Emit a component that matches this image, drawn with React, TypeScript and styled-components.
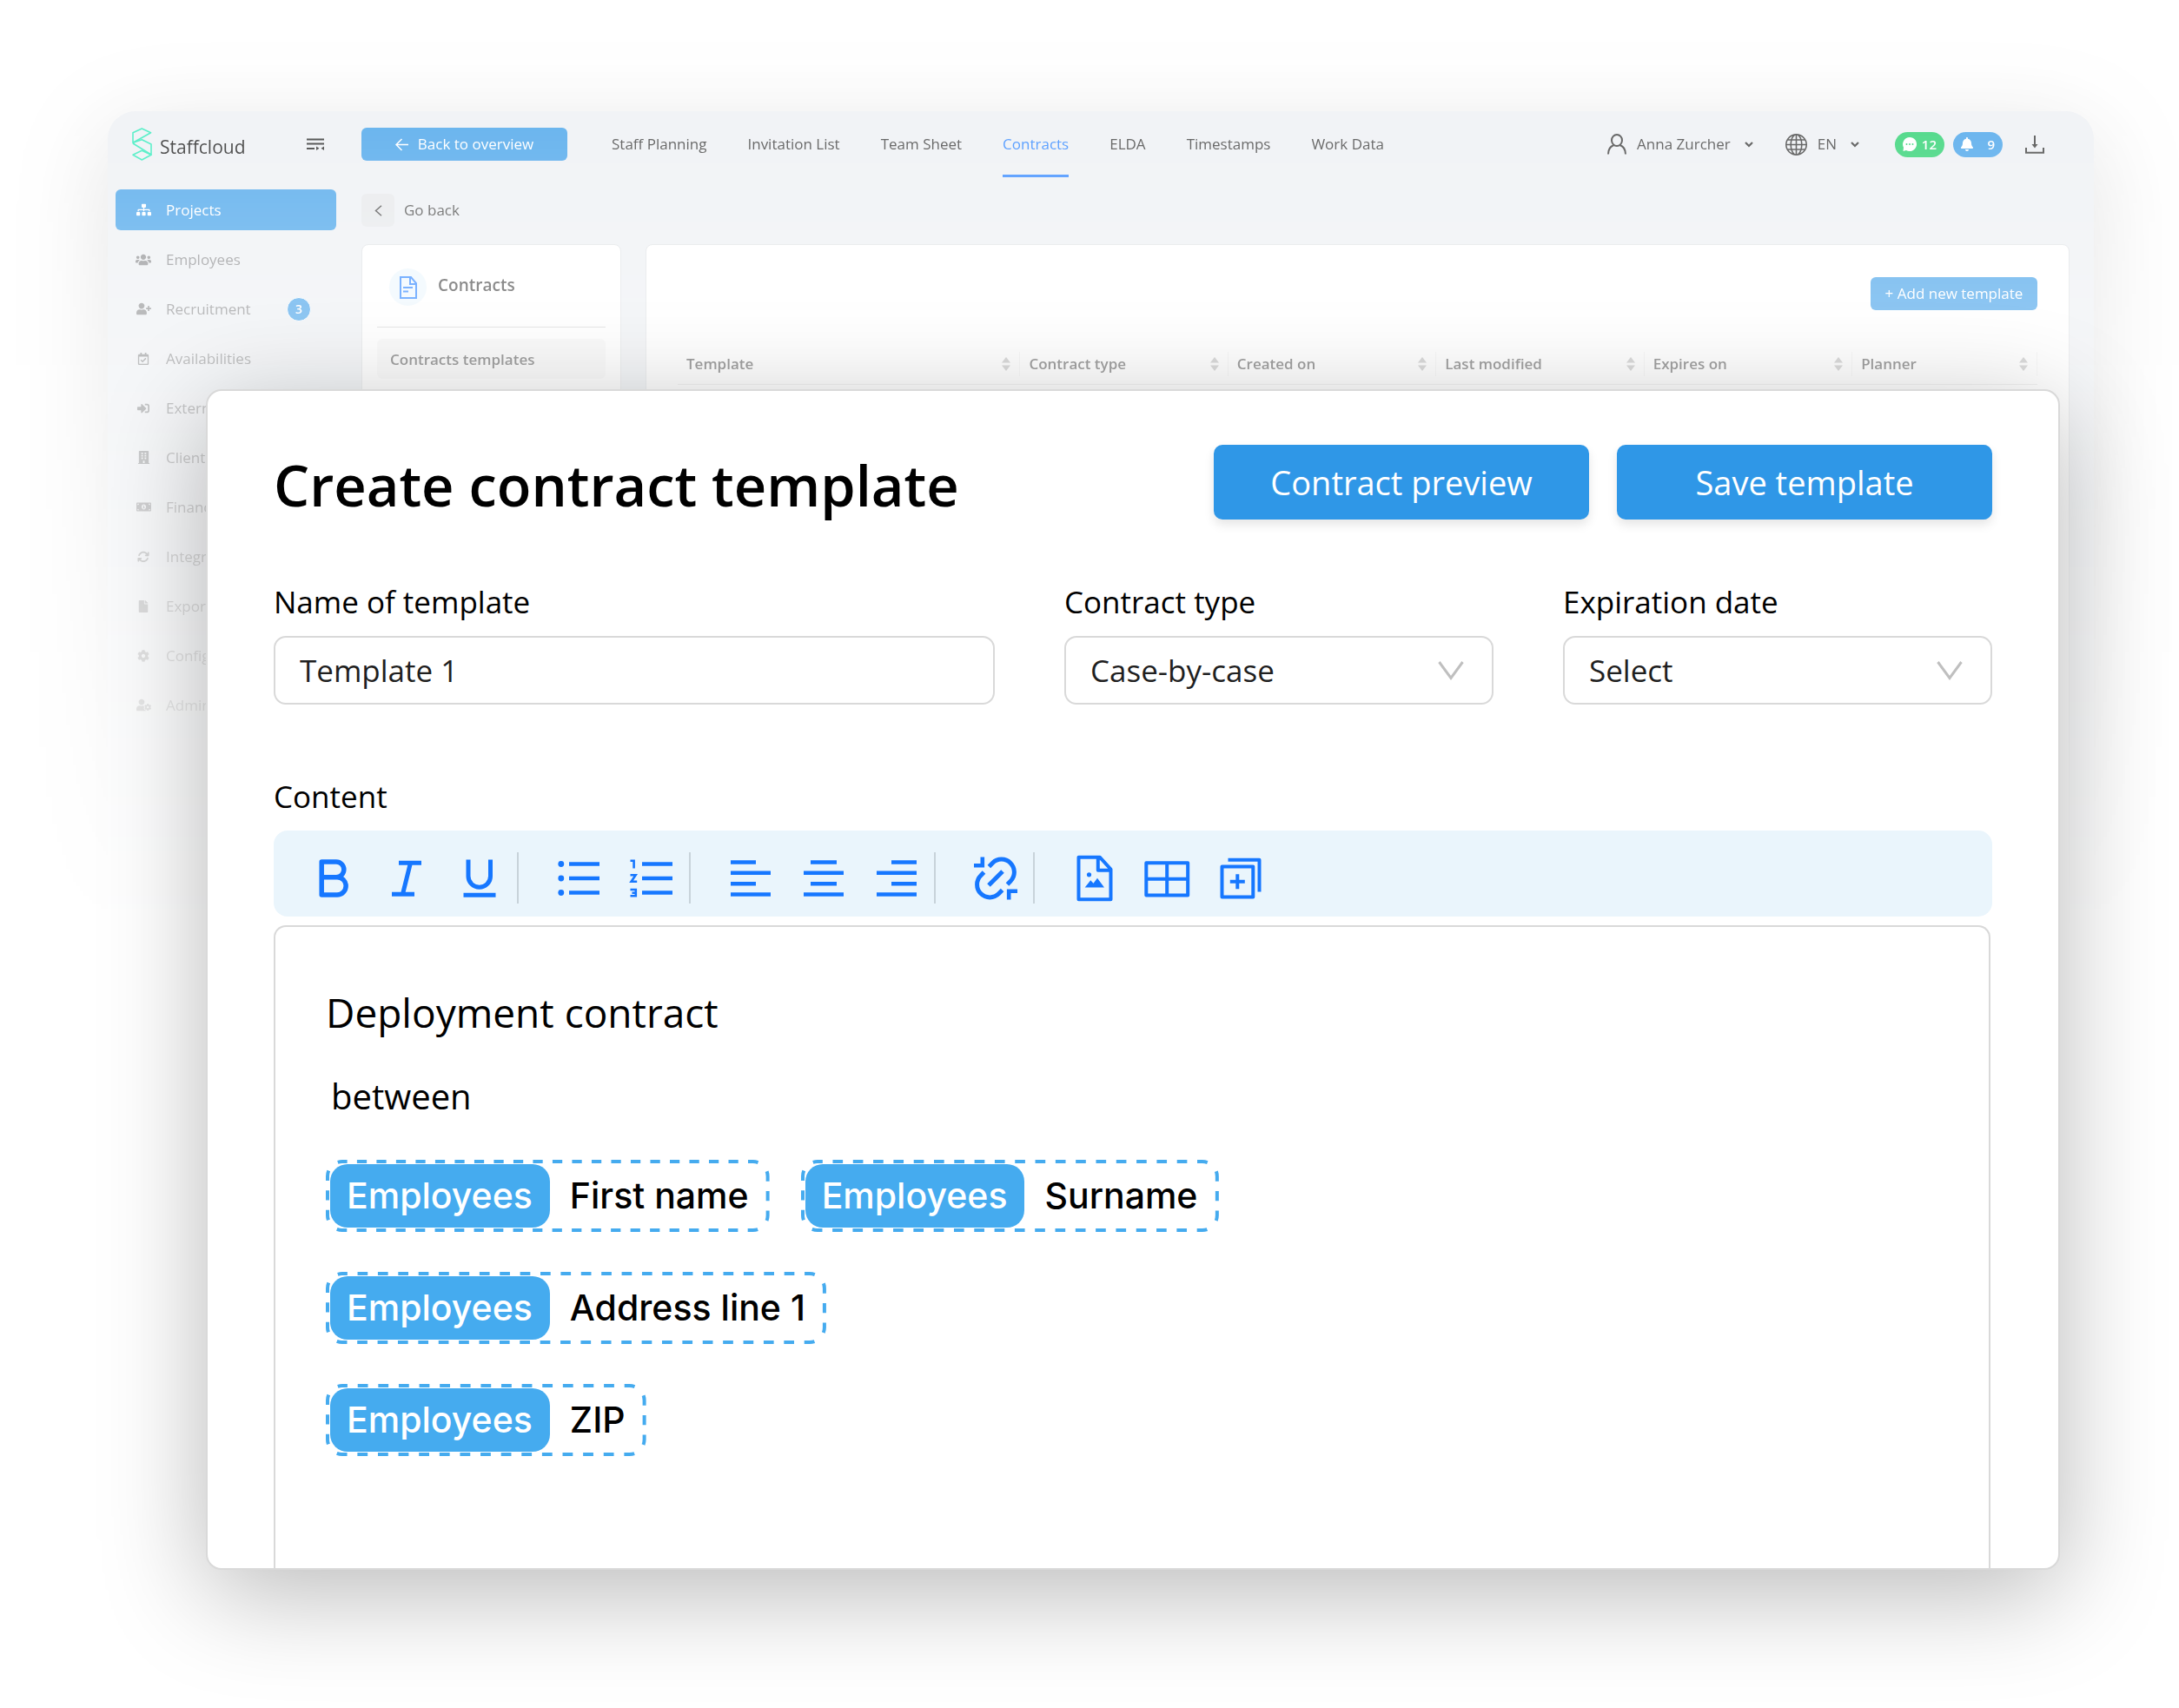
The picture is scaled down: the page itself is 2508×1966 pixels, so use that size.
import React, { useLayoutEffect, useRef, useState } from "react";
import styled, { createGlobalStyle } from "styled-components";
import {
  FaBell,
  FaBuilding,
  FaCog,
  FaFile,
  FaMoneyBillAlt,
  FaRegCalendarCheck,
  FaSignInAlt,
  FaSitemap,
  FaUserCog,
  FaUserPlus,
  FaUsers,
} from "react-icons/fa";
import { FaArrowsRotate } from "react-icons/fa6";
import { BsGlobe } from "react-icons/bs";

const GlobalStyle = createGlobalStyle`
  *, *::before, *::after { box-sizing: border-box; }
  body {
    margin: 0;
    background: #fff;
    color: #000;
    font-family: "Open Sans", "Noto Sans", sans-serif;
  }
  h1, h2, h3, p { margin: 0; font-weight: 400; }
  button, input, select { font: inherit; color: inherit; margin: 0; }
  button { border: 0; padding: 0; background: none; cursor: pointer; }
  a { color: inherit; text-decoration: none; }
  ul { list-style: none; margin: 0; padding: 0; }
  svg { display: block; flex: none; }
`;

/* ---------- page ---------- */

const Page = styled.div`
  display: grid;
  grid-template-columns: minmax(0, 1fr);
  min-height: 100vh;
  overflow: hidden;
`;

const Backdrop = styled.div`
  grid-area: 1 / 1;
  display: flex;
  padding: 128px 98px 0 124px;
  mask-image: linear-gradient(to bottom, rgba(0, 0, 0, 0.72) 128px, transparent 1080px);
`;

const AppWindow = styled.div`
  flex: 1;
  min-width: 0;
  display: grid;
  grid-template-columns: 254px minmax(0, 1fr);
  grid-template-rows: 76px 1fr;
  gap: 14px 29px;
  padding: 0 28px 0 9px;
  border-radius: 32px;
  background: #ebeef2;
  box-shadow: 0 26px 110px rgba(0, 0, 0, 0.17);
`;

const BrandBar = styled.div`
  display: flex;
  align-items: center;
  padding: 0 14px 0 19px;
`;

const BrandName = styled.span`
  margin: 6px auto 0 9px;
  font-size: 21px;
  line-height: 28px;
`;

const TopBar = styled.header`
  display: flex;
  align-items: center;
  padding-right: 29px;
`;

const PrimaryButton = styled.button<{ $width: number }>`
  display: flex;
  align-items: center;
  justify-content: center;
  gap: 11px;
  width: ${(p) => p.$width}px;
  height: 38px;
  border-radius: 6px;
  background: #2f97e7;
  color: #fff;
  font-size: 17px;
  line-height: 24px;
`;

const TopNav = styled.nav`
  display: flex;
  gap: 47px;
  height: 100%;
  margin: 0 auto 0 51px;
`;

const TopLink = styled.a<{ $active?: boolean }>`
  display: flex;
  align-items: center;
  border: solid transparent;
  border-width: 3px 0;
  border-bottom-color: ${(p) => (p.$active ? "#1677ff" : "transparent")};
  color: ${(p) => (p.$active ? "#1677ff" : "#262626")};
  font-size: 17px;
  line-height: 24px;
  white-space: nowrap;
`;

const MenuButton = styled.button`
  display: flex;
  align-items: center;
  gap: 12px;
  margin-right: 37px;
  color: #262626;
  font-size: 17px;
  line-height: 24px;
`;

const MenuText = styled.span`
  margin-right: 4px;
`;

const CountGroup = styled.div`
  display: flex;
  gap: 10px;
  margin: 0 26px 0 4px;
`;

const CountPill = styled.button<{ $color: string }>`
  display: flex;
  align-items: center;
  justify-content: space-between;
  width: 57px;
  height: 29px;
  padding: 0 9px 0 8px;
  border-radius: 15px;
  background: ${(p) => p.$color};
  color: #fff;
  font-size: 15px;
  font-weight: 600;
  line-height: 24px;
`;

const DownloadButton = styled.button`
  color: #262626;
`;

const SideNav = styled.ul`
  display: flex;
  flex-direction: column;
  gap: 10px;
`;

const SideLink = styled.a<{ $active?: boolean }>`
  display: flex;
  align-items: center;
  height: 47px;
  padding: 0 29px 0 22px;
  border-radius: 6px;
  background: ${(p) => (p.$active ? "#2f97e7" : "transparent")};
  color: ${(p) => (p.$active ? "#fff" : "#808284")};
  font-size: 17px;
  line-height: 24px;
`;

const SideIcon = styled.span`
  display: flex;
  justify-content: center;
  width: 20px;
  margin-right: 16px;
`;

const SideBadge = styled.span`
  display: flex;
  align-items: center;
  justify-content: center;
  width: 28px;
  height: 28px;
  margin-left: auto;
  border: 1px solid #fff;
  border-radius: 50%;
  background: #2f97e7;
  color: #fff;
  font-size: 14px;
  font-weight: 600;
`;

const Main = styled.main`
  display: grid;
  grid-template-columns: 299px minmax(0, 1fr);
  grid-template-rows: 38px 1fr;
  gap: 20px 28px;
  padding-top: 5px;
`;

const BackRow = styled.div`
  grid-column: 1 / -1;
`;

const BackButton = styled.button`
  display: flex;
  align-items: center;
  gap: 11px;
  color: #303030;
  font-size: 17px;
  line-height: 24px;
`;

const BackIcon = styled.span`
  display: flex;
  align-items: center;
  justify-content: center;
  width: 38px;
  height: 38px;
  border-radius: 6px;
  background: #e3e5e8;
`;

const Card = styled.section`
  border: 1px solid #dcdfe2;
  border-radius: 8px;
  background: #fff;
`;

const SideCard = styled(Card)`
  padding: 27px 17px;
`;

const SideCardHead = styled.div`
  display: flex;
  align-items: flex-start;
  gap: 13px;
  height: 68px;
  padding: 0 14px 24px;
  border-bottom: 1px solid #d0d0d0;
  color: #333;
`;

const RoundIcon = styled.span`
  display: flex;
  align-items: center;
  justify-content: center;
  width: 43px;
  height: 43px;
  border-radius: 50%;
  background: #ebf6fe;
  color: #1677ff;
`;

const SideCardTitle = styled.h2`
  font-size: 19px;
  font-weight: 600;
  line-height: 38px;
`;

const SideCardLink = styled.a`
  display: flex;
  align-items: center;
  height: 46px;
  margin-top: 13px;
  padding: 0 15px;
  border-radius: 6px;
  background: #f6f6f6;
  color: #444;
  font-size: 17px;
  font-weight: 600;
`;

const TableCard = styled(Card)`
  padding: 37px 36px;
`;

const CardActions = styled.div`
  display: flex;
  justify-content: flex-end;
`;

const Table = styled.table`
  width: 100%;
  margin-top: 39px;
  border-collapse: collapse;
  table-layout: fixed;
`;

const Col = styled.col<{ $share: number }>`
  width: ${(p) => p.$share}%;
`;

const HeadCell = styled.th`
  height: 46px;
  padding: 8px 0;
  border-bottom: 1px solid #e4e4e4;
  color: #444;
  font-size: 17px;
  font-weight: 600;
  line-height: 28px;
  text-align: left;
`;

const HeadInner = styled.span`
  display: flex;
  align-items: center;
  justify-content: space-between;
  padding: 0 10px;
  border-right: 1px solid #f0f0f0;
`;

/* ---------- modal ---------- */

const Modal = styled.section`
  grid-area: 1 / 1;
  position: relative;
  display: flex;
  flex-direction: column;
  margin: 448px 137px 159px 237px;
  padding: 62px 76px 0;
  border: 2px solid #d9d9d9;
  border-radius: 18px;
  background: #fff;
  box-shadow: 0 26px 120px rgba(0, 0, 0, 0.28);
`;

const ModalHead = styled.div`
  display: flex;
  align-items: center;
  gap: 32px;
`;

const ModalTitle = styled.h1`
  flex: 1;
  padding-top: 6px;
  font-size: 65px;
  font-weight: 600;
  line-height: 80px;
`;

const ActionButton = styled.button`
  width: 432px;
  height: 86px;
  border-radius: 10px;
  background: #2f97e7;
  box-shadow: 0 6px 12px rgba(0, 0, 0, 0.1);
  color: #fff;
  font-size: 38px;
  line-height: 52px;
`;

const Fields = styled.div`
  display: grid;
  grid-template-columns: 830fr 494fr 494fr;
  gap: 80px;
  margin-top: 71px;
`;

const Field = styled.div`
  display: flex;
  flex-direction: column;
  gap: 15px;
`;

const Label = styled.label`
  font-size: 35px;
  line-height: 48px;
`;

const TextInput = styled.input`
  width: 100%;
  height: 79px;
  padding: 0 28px;
  border: 2px solid #d9d9d9;
  border-radius: 14px;
  background: #fff;
  color: #1f1f1f;
  font-size: 35px;
  outline: none;
`;

const SelectWrap = styled.div`
  display: grid;
  align-items: center;
  & > * {
    grid-area: 1 / 1;
  }
  svg {
    justify-self: end;
    margin-right: 34px;
    pointer-events: none;
  }
`;

const SelectInput = styled(TextInput).attrs({ as: "select" })`
  appearance: none;
`;

const ContentField = styled.div`
  flex: 1;
  display: flex;
  flex-direction: column;
  margin-top: 82px;
`;

const ContentLabel = styled.h2`
  font-size: 35px;
  line-height: 48px;
`;

const Toolbar = styled.div`
  display: flex;
  gap: 27px;
  margin: 15px 0 10px;
  padding: 25px 27px 15px;
  border-radius: 16px;
  background: #eaf5fc;
`;

const ToolGroup = styled.div`
  display: flex;
  padding-right: 1px;
  border-right: 2px solid #c8d3da;
  &:last-child {
    border-right: 0;
  }
`;

const ToolButton = styled.button`
  display: flex;
  align-items: center;
  justify-content: center;
  width: 84px;
  height: 59px;
  color: #1677ff;
`;

const Editor = styled.article`
  flex: 1;
  margin-right: 2px;
  padding: 66px 58px 120px;
  border: 2px solid #d9d9d9;
  border-bottom: 0;
  border-radius: 14px 14px 0 0;
`;

const DocTitle = styled.h3`
  font-size: 46px;
  line-height: 64px;
`;

const DocText = styled.p`
  margin-top: 38px;
  padding-left: 6px;
  font-size: 40px;
  line-height: 54px;
`;

const ChipRow = styled.div`
  display: flex;
  gap: 36px;
  margin-top: 46px;
`;

const ChipBox = styled.span`
  position: relative;
  display: flex;
  align-items: center;
  gap: 23px;
  padding: 5px 24px 5px 5px;
  font-family: Inter, "Liberation Sans", sans-serif;
  font-size: 41px;
  font-weight: 500;
  line-height: 73px;
`;

const ChipOutline = styled.svg`
  position: absolute;
  inset: 0;
  width: 100%;
  height: 100%;
  overflow: visible;
`;

const ChipTag = styled.span`
  padding: 0 20px 0 19px;
  border-radius: 20px;
  background: #45abef;
  color: #fff;
`;

/* ---------- icons ---------- */

const Logo = () => (
  <svg width="23" height="38" viewBox="0 0 23 38" fill="none" stroke="#16e8b2" strokeWidth="1.6" strokeLinejoin="round">
    <path d="M1 5.7 11.3 1 21.6 5.7 1 17.3z" />
    <path d="M1 17.3 11.3 13.7 22 19v12L1 18" />
    <path d="M1 31.3 11.3 26.3 22 31.3 11.3 37z" />
  </svg>
);

const CollapseIcon = () => (
  <svg width="20" height="14" viewBox="0 0 20 14" fill="none" stroke="#111" strokeWidth="2">
    <path d="M0 1.5h20M0 6.5h20M0 12h9" />
    <path d="M11 9.5v4.5l3.5-2.2zM20 9.5v4.5l-3.5-2.2z" fill="#111" stroke="none" />
  </svg>
);

const ArrowLeft = () => (
  <svg width="15" height="15" viewBox="0 0 15 15" fill="none" stroke="currentColor" strokeWidth="1.5">
    <path d="M15 7.5H1.2M7.5 1 1 7.5 7.5 14" />
  </svg>
);

const AngleLeft = () => (
  <svg width="9" height="13" viewBox="0 0 9 13" fill="none" stroke="currentColor" strokeWidth="1.5">
    <path d="M8 .8 1.5 6.5 8 12.2" />
  </svg>
);

const PersonIcon = () => (
  <svg width="22" height="24" viewBox="0 0 22 24" fill="none" stroke="currentColor" strokeWidth="2">
    <ellipse cx="11" cy="7.5" rx="6" ry="6.5" />
    <path d="M1 23.5c0-5.5 2.5-9 6.5-10.5M21 23.5c0-5.5-2.5-9-6.5-10.5" />
  </svg>
);

const SmallChevron = () => (
  <svg width="10" height="7" viewBox="0 0 10 7" fill="none" stroke="currentColor" strokeWidth="2.2">
    <path d="M1 1 5 5 9 1" />
  </svg>
);

const ChatIcon = () => (
  <svg width="18" height="18" viewBox="0 0 18 18">
    <path d="M9 1a8 8 0 1 1-4 14.9L1.5 17 2 12.8A8 8 0 0 1 9 1z" fill="#fff" />
    <g fill="#11cb5e">
      <circle cx="5.5" cy="9" r="1" />
      <circle cx="9" cy="9" r="1" />
      <circle cx="12.5" cy="9" r="1" />
    </g>
  </svg>
);

const DownloadIcon = () => (
  <svg width="22" height="21" viewBox="0 0 22 21" fill="none" stroke="currentColor" strokeWidth="2">
    <path d="M11 0v12M1 14v5.8h20V14" />
    <path d="M7.5 10h7L11 14.5z" fill="currentColor" stroke="none" />
  </svg>
);

const DocumentIcon = () => (
  <svg width="20" height="26" viewBox="0 0 20 26" fill="none" stroke="currentColor" strokeWidth="2">
    <path d="M1 1h12l6 7v17H1zM12 1v8h7M4 13h11M4 17.5h6" />
  </svg>
);

const SortIcon = () => (
  <svg width="10" height="16" viewBox="0 0 10 16" fill="#b8b8b8">
    <path d="M5 0 10 6.5H0zM5 16 0 9.5h10z" />
  </svg>
);

const SelectChevron = () => (
  <svg width="30" height="22" viewBox="0 0 30 22" fill="none" stroke="#bfbfbf" strokeWidth="3">
    <path d="M1.5 1 15 19.5 28.5 1" />
  </svg>
);

const toolIcons: Record<string, React.ReactNode> = {
  Bold: (
    <path
      strokeWidth="5.5"
      strokeLinejoin="round"
      d="M14.2 9H31a8.85 8.85 0 0 1 0 17.7H14.2zM14.2 26.7H32a10.15 10.15 0 0 1 0 20.3H14.2z"
    />
  ),
  Italic: <path strokeWidth="5" d="M19 10.2H45M11 46.2H37M32.5 10.2 23.5 46.2" />,
  Underline: <path strokeWidth="5" d="M15 6.5V25.5a12.75 12.75 0 0 0 25.5 0V6.5M9.5 47.2h37" />,
  "Bulleted list": (
    <>
      <path d="M17 11.5h35M17 28h35M17 44.5h35" />
      <g fill="currentColor" stroke="none">
        <circle cx="7.8" cy="11.5" r="3.4" />
        <circle cx="7.8" cy="28" r="3.4" />
        <circle cx="7.8" cy="44.5" r="3.4" />
      </g>
    </>
  ),
  "Numbered list": (
    <>
      <path d="M17 11.5h35M17 28h35M17 44.5h35" />
      <path strokeWidth="2.6" d="M3.5 7.8H7.6V16.5M3.5 24.3H9.6L4.6 31.8H11.2M3.5 41H9.8V48.3H3.5M5.5 44.7H9.8" />
    </>
  ),
  "Align left": <path d="M5 9.5h29M5 21.8h46M5 34.2h29M5 46.5h46" />,
  "Align center": <path d="M13 9.5h30M5 21.8h46M13 34.2h30M5 46.5h46" />,
  "Align right": <path d="M22 9.5h29M5 21.8h46M22 34.2h29M5 46.5h46" />,
  Unlink: (
    <>
      <path d="M3 13.3H12.8V3.5M53 42.7H43.2V52.5" />
      <path
        strokeWidth="5"
        d="M20.4 14.4 24.3 10.4A14.7 14.7 0 0 1 45.1 31.2L41.5 35M35.6 41.6 31.7 45.6A14.7 14.7 0 0 1 10.9 24.8L14.5 21M20 36 36 20"
      />
    </>
  ),
  "Insert image": (
    <>
      <path strokeWidth="4" strokeLinejoin="round" d="M9.5 3.8H34L46.5 17.5V52.2H9.5zM31.8 3.8V18.8H46.5" />
      <path fill="currentColor" stroke="none" d="M16.7 38.5 23.3 30.2 26.5 33.8 31 27.8 39 38.5z" />
      <circle fill="currentColor" stroke="none" cx="21.5" cy="23.8" r="2.6" />
    </>
  ),
  "Insert table": <path strokeWidth="4" strokeLinejoin="round" d="M3.3 10.2H51.2V47.4H3.3zM27.2 10.2V47.4M3.3 28.8H51.2" />,
  "Insert field": (
    <path strokeWidth="4" strokeLinejoin="round" d="M6.5 14.5H42.3V49.5H6.5zM24.3 23.3V40.3M15.8 31.8H32.8M13.5 6.7H49.5V43.5" />
  ),
};

const toolGroups = [
  ["Bold", "Italic", "Underline"],
  ["Bulleted list", "Numbered list"],
  ["Align left", "Align center", "Align right"],
  ["Unlink"],
  ["Insert image", "Insert table", "Insert field"],
];

/* ---------- template field chip ---------- */

const STROKE = 4;
const RADIUS = 17;
const DASH_PITCH = 23;
const CORNER_DASH = 6;

// Whole dashes on every straight side, with half a dash turning into each corner.
function dashPattern(width: number, height: number) {
  const arc = (Math.PI / 2) * RADIUS;
  const out: number[] = [];
  let carry = 0;
  [width, height, width, height].forEach((size) => {
    const side = Math.max(size - STROKE - 2 * RADIUS, DASH_PITCH);
    const count = Math.max(1, Math.round(side / DASH_PITCH));
    const dash = side / count / 2;
    out.push(carry + dash / 2);
    for (let i = 1; i < count; i += 1) out.push(dash, dash);
    out.push(dash, dash / 2 + CORNER_DASH, arc - 2 * CORNER_DASH);
    carry = CORNER_DASH;
  });
  out.push(carry, 0);
  return out.join(" ");
}

function FieldChip({ source, name }: { source: string; name: string }) {
  const ref = useRef<HTMLSpanElement>(null);
  const [size, setSize] = useState({ w: 0, h: 0 });

  useLayoutEffect(() => {
    const node = ref.current;
    if (!node) return;
    const measure = () => {
      const box = node.getBoundingClientRect();
      setSize({ w: box.width, h: box.height });
    };
    measure();
    const observer = new ResizeObserver(measure);
    observer.observe(node);
    return () => observer.disconnect();
  }, []);

  return (
    <ChipBox ref={ref}>
      <ChipTag>{source}</ChipTag>
      <span>{name}</span>
      {size.w > 0 && (
        <ChipOutline aria-hidden="true">
          <rect
            x={STROKE / 2}
            y={STROKE / 2}
            width={size.w - STROKE}
            height={size.h - STROKE}
            rx={RADIUS}
            fill="none"
            stroke="#45abef"
            strokeWidth={STROKE}
            strokeDasharray={dashPattern(size.w, size.h)}
          />
        </ChipOutline>
      )}
    </ChipBox>
  );
}

/* ---------- data ---------- */

const sideItems = [
  { label: "Projects", icon: <FaSitemap size={17} />, active: true },
  { label: "Employees", icon: <FaUsers size={18} /> },
  { label: "Recruitment", icon: <FaUserPlus size={17} />, badge: 3 },
  { label: "Availabilities", icon: <FaRegCalendarCheck size={14} /> },
  { label: "External", icon: <FaSignInAlt size={14} /> },
  { label: "Clients", icon: <FaBuilding size={15} /> },
  { label: "Finances", icon: <FaMoneyBillAlt size={17} /> },
  { label: "Integrations", icon: <FaArrowsRotate size={14} /> },
  { label: "Exports", icon: <FaFile size={14} /> },
  { label: "Configuration", icon: <FaCog size={14} /> },
  { label: "Administration", icon: <FaUserCog size={17} /> },
];

const topItems = ["Staff Planning", "Invitation List", "Team Sheet", "Contracts", "ELDA", "Timestamps", "Work Data"];

const columns = [
  { label: "Template", share: 25.2 },
  { label: "Contract type", share: 15.3 },
  { label: "Created on", share: 15.3 },
  { label: "Last modified", share: 15.3 },
  { label: "Expires on", share: 15.3 },
  { label: "Planner", share: 13.6 },
];

const chipRows = [["First name", "Surname"], ["Address line 1"], ["ZIP"]];

export default function App() {
  return (
    <Page>
      <GlobalStyle />
      <Backdrop>
        <AppWindow>
          <BrandBar>
            <Logo />
            <BrandName>Staffcloud</BrandName>
            <button aria-label="Collapse menu">
              <CollapseIcon />
            </button>
          </BrandBar>
          <TopBar>
            <PrimaryButton $width={237}>
              <ArrowLeft />
              Back to overview
            </PrimaryButton>
            <TopNav>
              {topItems.map((item) => (
                <TopLink key={item} href="#" $active={item === "Contracts"}>
                  {item}
                </TopLink>
              ))}
            </TopNav>
            <MenuButton>
              <PersonIcon />
              <MenuText>Anna Zurcher</MenuText>
              <SmallChevron />
            </MenuButton>
            <MenuButton>
              <BsGlobe size={25} />
              <MenuText>EN</MenuText>
              <SmallChevron />
            </MenuButton>
            <CountGroup>
              <CountPill $color="#11cb5e" aria-label="Messages">
                <ChatIcon />
                12
              </CountPill>
              <CountPill $color="#2f97e7" aria-label="Notifications">
                <FaBell size={16} />9
              </CountPill>
            </CountGroup>
            <DownloadButton aria-label="Download">
              <DownloadIcon />
            </DownloadButton>
          </TopBar>
          <SideNav>
            {sideItems.map((item) => (
              <li key={item.label}>
                <SideLink href="#" $active={item.active}>
                  <SideIcon>{item.icon}</SideIcon>
                  {item.label}
                  {item.badge && <SideBadge>{item.badge}</SideBadge>}
                </SideLink>
              </li>
            ))}
          </SideNav>
          <Main>
            <BackRow>
              <BackButton>
                <BackIcon>
                  <AngleLeft />
                </BackIcon>
                Go back
              </BackButton>
            </BackRow>
            <SideCard>
              <SideCardHead>
                <RoundIcon>
                  <DocumentIcon />
                </RoundIcon>
                <SideCardTitle>Contracts</SideCardTitle>
              </SideCardHead>
              <SideCardLink href="#">Contracts templates</SideCardLink>
            </SideCard>
            <TableCard>
              <CardActions>
                <PrimaryButton $width={192}>+ Add new template</PrimaryButton>
              </CardActions>
              <Table>
                <colgroup>
                  {columns.map((column) => (
                    <Col key={column.label} $share={column.share} />
                  ))}
                </colgroup>
                <thead>
                  <tr>
                    {columns.map((column) => (
                      <HeadCell key={column.label}>
                        <HeadInner>
                          {column.label}
                          <SortIcon />
                        </HeadInner>
                      </HeadCell>
                    ))}
                  </tr>
                </thead>
              </Table>
            </TableCard>
          </Main>
        </AppWindow>
      </Backdrop>

      <Modal role="dialog" aria-labelledby="modal-title">
        <ModalHead>
          <ModalTitle id="modal-title">Create contract template</ModalTitle>
          <ActionButton>Contract preview</ActionButton>
          <ActionButton>Save template</ActionButton>
        </ModalHead>
        <Fields>
          <Field>
            <Label htmlFor="template-name">Name of template</Label>
            <TextInput id="template-name" defaultValue="Template 1" />
          </Field>
          <Field>
            <Label htmlFor="contract-type">Contract type</Label>
            <SelectWrap>
              <SelectInput id="contract-type">
                <option>Case-by-case</option>
              </SelectInput>
              <SelectChevron />
            </SelectWrap>
          </Field>
          <Field>
            <Label htmlFor="expiration-date">Expiration date</Label>
            <SelectWrap>
              <SelectInput id="expiration-date">
                <option>Select</option>
              </SelectInput>
              <SelectChevron />
            </SelectWrap>
          </Field>
        </Fields>
        <ContentField>
          <ContentLabel>Content</ContentLabel>
          <Toolbar role="toolbar" aria-label="Formatting">
            {toolGroups.map((group) => (
              <ToolGroup key={group[0]}>
                {group.map((tool) => (
                  <ToolButton key={tool} aria-label={tool}>
                    <svg width="56" height="56" viewBox="0 0 56 56" fill="none" stroke="currentColor" strokeWidth="4.6">
                      {toolIcons[tool]}
                    </svg>
                  </ToolButton>
                ))}
              </ToolGroup>
            ))}
          </Toolbar>
          <Editor>
            <DocTitle>Deployment contract</DocTitle>
            <DocText>between</DocText>
            {chipRows.map((row) => (
              <ChipRow key={row[0]}>
                {row.map((name) => (
                  <FieldChip key={name} source="Employees" name={name} />
                ))}
              </ChipRow>
            ))}
          </Editor>
        </ContentField>
      </Modal>
    </Page>
  );
}
